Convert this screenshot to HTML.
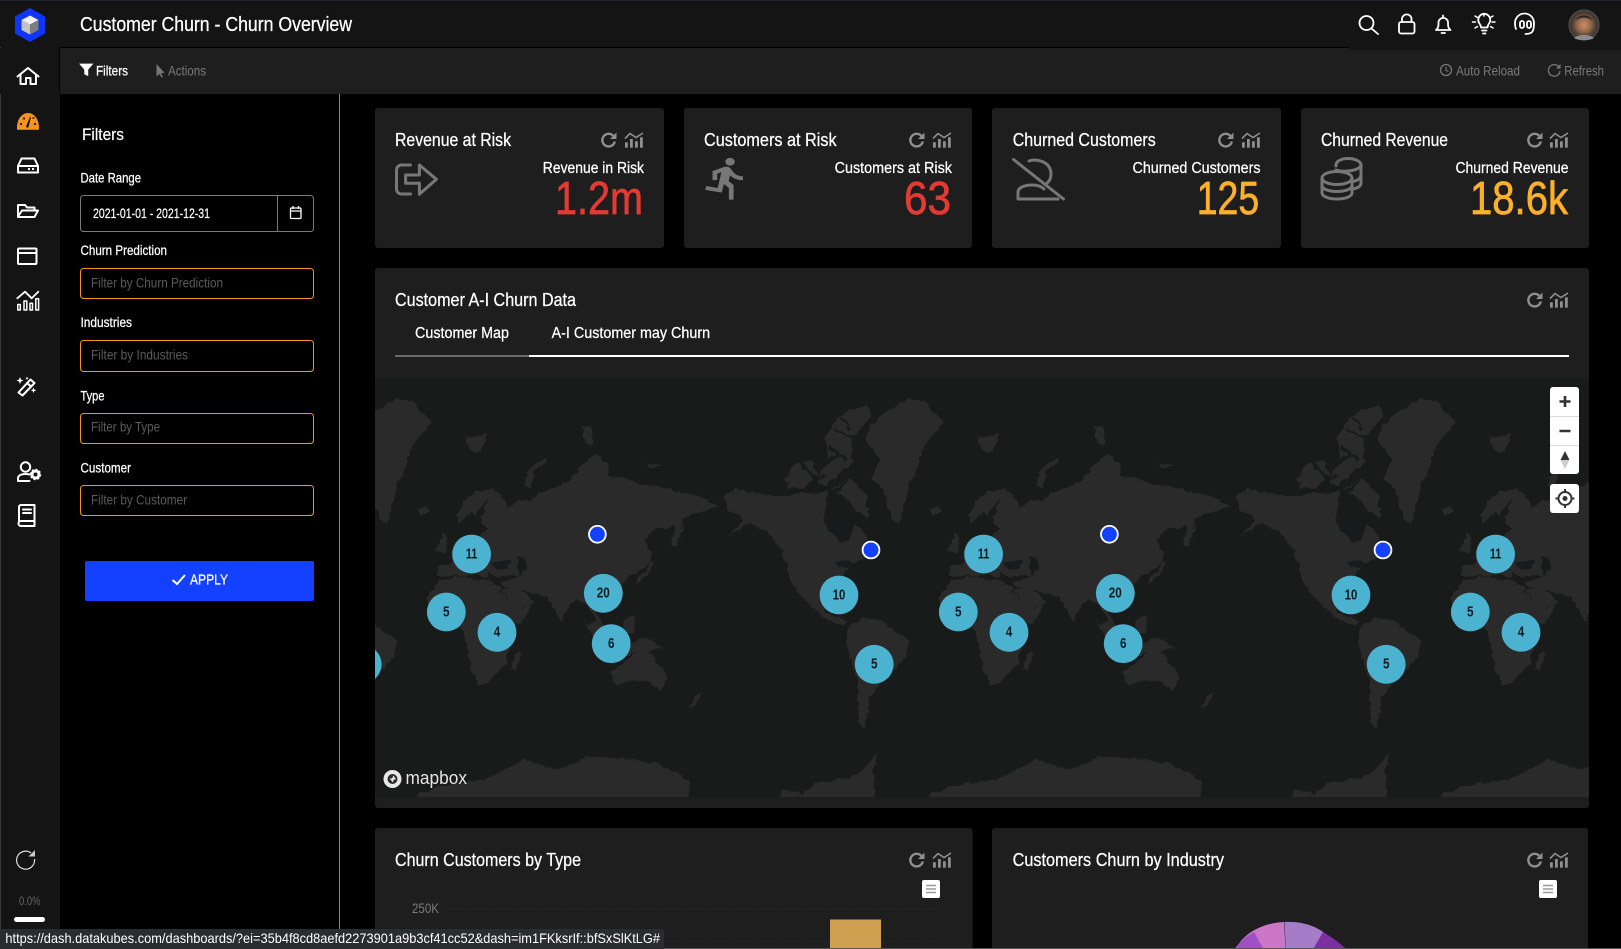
<!DOCTYPE html>
<html><head><meta charset="utf-8"><title>Customer Churn - Churn Overview</title>
<style>
html,body{margin:0;padding:0;background:#000;width:1621px;height:949px;overflow:hidden}
svg{display:block;position:absolute;left:0;top:0}
text{font-family:"Liberation Sans Narrow","Liberation Sans",sans-serif;fill:#fff}
.l,.ct,.sl{stroke:#fff;stroke-width:.25}
.g{fill:#7a7a7a;stroke:none}.p{fill:#5a5a5a;font-size:14px}.l{font-size:14px}
.ct{font-size:18px}.sl{font-size:15.5px}.v{font-size:46px;stroke-width:.7}
.c{font-size:15px;font-weight:bold;fill:#0c1a20;text-anchor:middle}
.ic{fill:none;stroke:#fff;stroke-width:2;stroke-linejoin:round;stroke-linecap:round}
.li{fill:none;stroke:#777;stroke-width:3;stroke-linejoin:round;stroke-linecap:round}
</style></head><body>
<svg width="1621" height="949" viewBox="0 0 1621 949" xmlns="http://www.w3.org/2000/svg">
<defs>
<clipPath id="mc"><rect x="375" y="378" width="1214" height="419"/></clipPath>
<filter id="rough"><feTurbulence type="fractalNoise" baseFrequency=".05" numOctaves="3" seed="4"/><feDisplacementMap in="SourceGraphic" scale="16" xChannelSelector="R" yChannelSelector="G"/></filter>
<g id="rf"><path d="M13.300 4.900A6.300 6.300 0 1 0 14.800 10.500" fill="none" stroke="#8f8f8f" stroke-width="2.400"/><path d="M16.500 1.500V8H10z" fill="#8f8f8f"/></g>
<g id="ch" fill="#8f8f8f"><path d="M0 6.500L5 1.500 11 5.500 18 1" fill="none" stroke="#8f8f8f" stroke-width="1.600"/><rect x="0" y="10.300" width="2.800" height="5.400"/><rect x="5" y="7" width="2.800" height="8.700"/><rect x="10" y="9.300" width="2.800" height="6.400"/><rect x="15" y="5.300" width="2.800" height="10.400"/></g>
<g id="world" transform="translate(370,380) scale(.3954,.3333)"><g fill="#2b2a29" filter="url(#rough)">
<!-- Africa --><path d="M145 665L155 630 178 600 230 590 262 600 300 600 328 622 345 660 362 695 410 668 395 705 370 735 352 800 345 850 322 880 298 912 270 912 258 880 247 820 238 755 205 738 175 735 150 705Z"/>
<path d="M358 868L365 830 378 812 382 825 372 868Z"/>
<!-- Arabia --><path d="M335 628L375 625 402 645 415 668 385 680 362 700 348 665Z"/>
<!-- Eurasia --><path d="M170 590L172 555 205 552 212 528 232 505 222 480 238 470 258 478 280 462 300 445 270 420 258 395 225 430 218 405 240 360 275 330 315 328 345 368 345 385 375 360 400 362 430 340 470 322 510 300 530 262 570 220 605 258 600 290 640 290 680 312 720 318 760 328 795 340 830 345 880 380 850 392 815 402 790 415 775 500 762 500 770 440 745 445 715 450 692 478 715 520 700 560 670 580 650 592 636 620 642 640 610 670 590 682 575 690 570 702 585 725 595 745 572 720 548 675 525 655 508 670 482 722 468 690 445 650 415 640 375 628 345 622 330 610 375 590 350 585 318 588 300 575 290 595 268 585 240 590 200 588Z"/>
<!-- Japan / Sakhalin --><path d="M672 610L700 590 712 570 718 545 708 545 700 575 675 595Z"/><path d="M765 500L795 420 785 470Z"/>
<!-- seas --><path fill="#191a1a" d="M375 530L392 535 398 570 380 590 370 560Z"/><path fill="#191a1a" d="M310 548L355 540 350 565 318 570Z"/><path fill="#191a1a" d="M272 395L300 355 285 400 280 430 262 432Z"/>
<!-- Britain --><path d="M168 512L185 450 195 490 192 520Z"/><path d="M120 388L145 378 150 395 130 405Z"/>
<!-- islands --><path d="M240 175L295 160 280 215 262 220Z"/><path d="M535 140L555 135 570 195 545 190Z"/><path d="M695 250L740 255 710 265Z"/><path d="M393 315L400 270 445 232 450 240 412 275 405 325Z"/>
<!-- SE Asia --><path d="M548 735L578 720 600 755 590 790 560 760Z"/><path d="M640 720L670 705 665 760 640 760Z"/><path d="M610 820L650 800 690 770 740 800 700 815 640 825Z"/>
<!-- Australia --><path d="M610 875L640 850 678 812 715 820 722 840 750 880 745 915 735 936 705 905 665 900 622 916 615 900Z"/>
<path d="M805 982L825 950 840 938 838 950 815 985Z"/>
<!-- N America --><path d="M895 350L925 325 960 335 1000 345 1050 350 1090 338 1130 340 1160 330 1155 365 1145 420 1160 445 1190 490 1215 475 1225 430 1250 460 1275 510 1250 535 1215 555 1200 580 1190 622 1205 640 1170 630 1145 655 1150 695 1180 710 1210 725 1195 740 1150 715 1115 680 1085 640 1060 590 1050 540 1030 490 1000 450 960 430 930 450 905 470 945 420 905 385Z"/>
<path fill="#191a1a" d="M1155 420L1200 410 1215 470 1185 478 1160 455Z"/>
<path fill="#191a1a" d="M1175 545L1210 540 1225 560 1185 562Z"/>
<!-- Arctic archipelago --><path d="M1050 300L1075 255 1115 240 1130 285 1100 325 1060 325Z"/><path d="M1150 170L1185 110 1220 85 1260 80 1272 98 1240 150 1215 185 1222 245 1190 280 1150 320 1125 300 1160 245Z"/><path d="M1170 330L1210 290 1255 345 1262 415 1232 392 1200 352Z"/>
<g fill="none" stroke="#191a1a" stroke-width="7"><path d="M1090 250L1130 300M1160 200L1205 240M1175 150L1225 175M1130 260L1185 225M1190 110L1215 150M1215 290L1175 335M1105 330L1150 280"/></g>
<!-- Greenland --><path d="M1252 180L1265 140 1300 100 1360 55 1400 65 1425 95 1450 125 1420 170 1395 215 1385 265 1365 310 1340 432 1320 420 1300 335 1270 290 1290 240Z"/>
<path d="M1415 390L1440 380 1445 395 1425 405Z"/>
<!-- S America --><path d="M1205 775L1215 735 1250 712 1290 720 1320 750 1368 785 1345 850 1310 880 1290 910 1262 960 1255 1042 1238 1030 1232 960 1235 905 1208 810Z"/>
<!-- Antarctica --><path d="M110 1290L120 1245 180 1218 300 1195 390 1138 470 1170 550 1132 640 1135 720 1150 790 1185 812 1215 795 1290Z"/>
<path d="M1010 1290L1045 1232 1095 1240 1130 1210 1220 1190 1255 1160 1285 1115 1272 1170 1278 1290Z"/>
</g></g>
</defs>

<!-- backgrounds -->
<rect width="1621" height="949" fill="#000"/>
<rect x="0" y="0" width="60" height="949" fill="#141414"/>
<rect x="0" y="0" width="1" height="949" fill="#3a3a3a"/>
<rect x="0" y="48" width="1621" height="46" fill="#1e1e1e"/>
<rect x="0" y="48" width="60" height="46" fill="#141414"/>
<rect x="0" y="0" width="1621" height="47" fill="#141414"/>
<rect x="1349" y="47" width="272" height="3" fill="#141414"/>
<rect x="0" y="0" width="1621" height="1" fill="#1d2030"/>
<rect x="59" y="48" width="1" height="46" fill="#000"/>
<rect x="60" y="47" width="1289" height="1" fill="#000"/>
<rect x="339" y="94" width="1" height="840" fill="#8a8a8a"/>

<!-- logo -->
<path d="M30 8L45 16.500V33.500L30 42 15 33.500V16.500Z" fill="#1034f8"/>
<path d="M30 15.500L38.500 20 30 24.500 21.500 20Z" fill="#f2f2f2"/><path d="M21.500 20L30 24.500V34.500L21.500 30Z" fill="#c4c4c4"/><path d="M38.500 20L30 24.500V34.500L38.500 30Z" fill="#7d7d7d"/>
<text x="80" y="31" font-size="20" stroke="#fff" stroke-width=".25" textLength="272" lengthAdjust="spacingAndGlyphs">Customer Churn - Churn Overview</text>

<!-- top icons -->
<g class="ic" stroke-width="1.800" style="stroke-width:1.800"><circle cx="1366.500" cy="23" r="7"/><path d="M1371.500 28.500L1378 34"/>
<rect x="1399" y="22" width="15.500" height="11.500" rx="2"/><path d="M1402 22v-3.500a4.800 4.800 0 0 1 9.500 0V22"/>
<path d="M1436 30c2.500-2 2.500-4 2.500-8a4.800 4.800 0 0 1 9.500 0c0 4 0 6 2.500 8zM1441.500 33h3.500"/><path d="M1443 15.500v1.500"/>
<path d="M1479.500 23.500a6 6 0 1 1 9.500 0c-1.200 1.600-1.500 3-1.500 4h-6.500c0-1-.3-2.400-1.500-4zM1482 30.500h4.500M1483 33.500h2.500"/><path style="stroke-width:1.500" d="M1472.500 22h3M1492 22h3M1475 16l2.500 1.500M1493 16l-2.500 1.500M1475 28l2.500-1.500M1493 28l-2.500-1.500M1484 14v2"/>
<path d="M1516 29c-1-2-1-4-1-6a9.500 9.500 0 0 1 19 0c0 5-.5 7-1.500 8.500-1.500 2-4 2.500-7 2.500"/><rect x="1520" y="21" width="4" height="7" rx="2"/><rect x="1527" y="21" width="4" height="7" rx="2"/></g>
<defs><radialGradient id="av" cx=".5" cy=".5" r=".55"><stop offset="0" stop-color="#c88f6a"/><stop offset=".4" stop-color="#9a6a4a"/><stop offset=".7" stop-color="#4d4236"/><stop offset="1" stop-color="#2e2a24"/></radialGradient></defs>
<circle cx="1584" cy="25" r="15" fill="url(#av)" stroke="#555" stroke-width="1"/>
<path d="M1576 20c3-6 13-6 16 0l-2-1c-4-2-9-2-12 0z" fill="#2a2320"/><path d="M1574 38c4-4 16-4 20 0-5 3-15 3-20 0z" fill="#8c8c90"/>

<!-- subbar -->
<path d="M80 64h12.500l-4.700 5.500v6l-3.100-1.500v-4.500z" fill="#fff" stroke="#fff" stroke-width=".8"/>
<text x="96" y="75.500" class="l" textLength="32" lengthAdjust="spacingAndGlyphs">Filters</text>
<path d="M156.500 64v12.500l3-2.500 2 3.500 1.500-.8-2-3.500 3.500-.3z" fill="#777"/>
<text x="168" y="75.500" class="l g" textLength="38" lengthAdjust="spacingAndGlyphs">Actions</text>
<circle cx="1446" cy="70" r="5.500" fill="none" stroke="#777" stroke-width="1.300"/><path d="M1446 67v3.500l2.500 1" fill="none" stroke="#777" stroke-width="1.200"/>
<text x="1456" y="75.500" class="l g" textLength="64" lengthAdjust="spacingAndGlyphs">Auto Reload</text>
<path d="M1558.500 66.500A5.800 5.800 0 1 0 1560 71" fill="none" stroke="#777" stroke-width="1.300"/><path d="M1560.500 64v4.500H1556z" fill="#777"/>
<text x="1564.300" y="75.500" class="l g" textLength="39.700" lengthAdjust="spacingAndGlyphs">Refresh</text>

<!-- side icons -->
<g class="ic">
<path d="M17.500 76.500L28 68l10.500 8.500M20.500 74.500V84h5.500v-6h4.500v6H36v-9.500"/>
<path d="M18 166l3.500-7.500h13L38 166v6.500H18zM18 166h20"/>
<path d="M18 216.500V205h7l2 2.500h7.500v3M18 216.500l4-6h16l-3.500 6.500H18z"/>
<rect x="18" y="248.500" width="18.500" height="15.500" rx="1"/><path d="M18 253h18.500"/>
<path d="M17.300 298.300L25 291.700 31.700 298.300 38.300 291.700" stroke-width="1.800" style="stroke-width:1.800"/>
<path style="stroke-width:1.500" d="M17.800 304.500h2.500v5.500h-2.500zM24 301h2.800v9H24zM30 303.200h2.500V310H30zM35.800 298.800h2.800V310h-2.800z"/>
<path d="M18.500 392.500l12-13 4 3.500-12 12.500zM27 383l4 3.500" />
<circle cx="25.500" cy="467" r="4.700"/><path d="M18 481v-2.500c0-3.500 4-4.500 7.500-4.500 1.500 0 3 .2 4 .5M18 481h11.500"/>
<path d="M19 521V507a2 2 0 0 1 2-2h13.500v16H21a2.500 2.500 0 0 0 0 5h13.500v-5M23 509.500h8M23 513h8"/>
</g>
<path d="M20 377l1 2.500 2.500 1-2.500 1-1 2.500-1-2.500-2.500-1 2.500-1zM33.500 387.500l.8 2 2 .8-2 .8-.8 2-.8-2-2-.8 2-.8zM27 376.500l.5 1.300 1.300.5-1.300.5-.5 1.300-.5-1.300-1.300-.5 1.300-.5z" fill="#fff"/>
<circle cx="35.500" cy="474.500" r="3.500" fill="none" stroke="#fff" stroke-width="3"/><circle cx="35.500" cy="474.500" r="5" fill="none" stroke="#fff" stroke-width="1.500" stroke-dasharray="2 1.900"/>
<path d="M17 129c-.5-9 4.500-16 11-16s11.500 7 11 16c0 .5-.5.8-1 .8H18c-.5 0-1-.3-1-.8z" fill="#f7941e"/>
<path d="M30.500 117l-2.500 10-1.500-.3z" fill="#141414" stroke="#141414"/><g fill="#141414"><circle cx="21" cy="124" r="1.100"/><circle cx="24" cy="118.500" r="1.100"/><circle cx="35" cy="124" r="1.100"/><circle cx="33.500" cy="118" r="1"/></g>
<rect x="28" y="168" width="2" height="2" fill="#fff"/><rect x="32" y="168" width="2" height="2" fill="#fff"/>
<path d="M31 853a9 9 0 1 0 3.500 6" fill="none" stroke="#ddd" stroke-width="1.200"/><path d="M35 850v6.500h-6.500z" fill="#ddd" opacity=".9"/>
<text x="19" y="905" font-size="11.500" style="fill:#666" textLength="21.500" lengthAdjust="spacingAndGlyphs">0.0%</text>
<rect x="14" y="917" width="31" height="5" rx="2.500" fill="#fff"/>

<!-- filter panel -->
<text x="82" y="140" font-size="17" stroke="#fff" stroke-width=".2" textLength="42" lengthAdjust="spacingAndGlyphs">Filters</text>
<text x="80.500" y="182.500" class="l" textLength="60.500" lengthAdjust="spacingAndGlyphs">Date Range</text>
<rect x="80.500" y="195.500" width="233" height="36" rx="3" fill="#000" stroke="#7a7a7a"/><rect x="277" y="196" width="1" height="35" fill="#7a7a7a"/>
<text x="93" y="218" font-size="13.500" stroke="#fff" stroke-width=".2" textLength="117" lengthAdjust="spacingAndGlyphs">2021-01-01 - 2021-12-31</text>
<rect x="290.500" y="208" width="10.500" height="10.500" rx="1" fill="none" stroke="#fff" stroke-width="1.300"/><path d="M290.500 211h10.500M293 206v3M298.500 206v3" stroke="#fff" stroke-width="1.300"/>
<text x="80.500" y="255" class="l" textLength="86.500" lengthAdjust="spacingAndGlyphs">Churn Prediction</text>
<rect x="80.500" y="268.500" width="233" height="30" rx="3" fill="#000" stroke="#f7941e"/>
<text x="91" y="287.500" class="p" textLength="132" lengthAdjust="spacingAndGlyphs">Filter by Churn Prediction</text>
<text x="80.500" y="327" class="l" textLength="51.500" lengthAdjust="spacingAndGlyphs">Industries</text>
<rect x="80.500" y="340.500" width="233" height="31" rx="3" fill="#000" stroke="#f7941e"/>
<text x="91" y="359.500" class="p" textLength="97" lengthAdjust="spacingAndGlyphs">Filter by Industries</text>
<text x="80.500" y="400.500" class="l" textLength="24" lengthAdjust="spacingAndGlyphs">Type</text>
<rect x="80.500" y="413.500" width="233" height="30" rx="3" fill="#000" stroke="#f7941e"/>
<text x="91" y="431.500" class="p" textLength="69" lengthAdjust="spacingAndGlyphs">Filter by Type</text>
<text x="80.500" y="472.500" class="l" textLength="50.500" lengthAdjust="spacingAndGlyphs">Customer</text>
<rect x="80.500" y="485.500" width="233" height="30" rx="3" fill="#000" stroke="#f7941e"/>
<text x="91" y="504.500" class="p" textLength="96" lengthAdjust="spacingAndGlyphs">Filter by Customer</text>
<rect x="85" y="561" width="229" height="40" rx="2" fill="#1440ff"/>
<path d="M172.500 580l4.500 4 8-9" fill="none" stroke="#fff" stroke-width="2"/>
<text x="190" y="584.500" font-size="15" stroke="#fff" stroke-width=".25" textLength="38" lengthAdjust="spacingAndGlyphs">APPLY</text>

<!-- KPI cards -->
<g fill="#1e1e1e"><rect x="375" y="108" width="289" height="140" rx="3"/><rect x="684" y="108" width="288" height="140" rx="3"/><rect x="992" y="108" width="289" height="140" rx="3"/><rect x="1301" y="108" width="288" height="140" rx="3"/><rect x="375" y="268" width="1214" height="540" rx="3"/><rect x="375" y="828" width="597.500" height="130" rx="3"/><rect x="992" y="828" width="596" height="130" rx="3"/></g>

<text x="395" y="146.200" class="ct" textLength="116" lengthAdjust="spacingAndGlyphs">Revenue at Risk</text>
<text x="704" y="146.200" class="ct" textLength="132.600" lengthAdjust="spacingAndGlyphs">Customers at Risk</text>
<text x="1012.700" y="146.200" class="ct" textLength="143" lengthAdjust="spacingAndGlyphs">Churned Customers</text>
<text x="1321" y="146.200" class="ct" textLength="127" lengthAdjust="spacingAndGlyphs">Churned Revenue</text>

<text x="542.800" y="173" class="sl" textLength="101.200" lengthAdjust="spacingAndGlyphs">Revenue in Risk</text>
<text x="834.600" y="173" class="sl" textLength="117.400" lengthAdjust="spacingAndGlyphs">Customers at Risk</text>
<text x="1132.500" y="173" class="sl" textLength="128" lengthAdjust="spacingAndGlyphs">Churned Customers</text>
<text x="1455.500" y="173" class="sl" textLength="113" lengthAdjust="spacingAndGlyphs">Churned Revenue</text>

<text x="555" y="214" class="v" style="fill:#e53a33;stroke:#e53a33" textLength="88" lengthAdjust="spacingAndGlyphs">1.2m</text>
<text x="904" y="214" class="v" style="fill:#e53a33;stroke:#e53a33" textLength="47" lengthAdjust="spacingAndGlyphs">63</text>
<text x="1196.700" y="214" class="v" style="fill:#fbb02a;stroke:#fbb02a" textLength="62.500" lengthAdjust="spacingAndGlyphs">125</text>
<text x="1470" y="214" class="v" style="fill:#fbb02a;stroke:#fbb02a" textLength="98" lengthAdjust="spacingAndGlyphs">18.6k</text>

<use href="#rf" x="600" y="131"/><use href="#ch" x="625" y="132"/>
<use href="#rf" x="908" y="131"/><use href="#ch" x="933" y="132"/>
<use href="#rf" x="1217" y="131"/><use href="#ch" x="1242" y="132"/>
<use href="#rf" x="1526" y="131"/><use href="#ch" x="1550" y="132"/>
<use href="#rf" x="1526" y="291"/><use href="#ch" x="1550" y="292"/>
<use href="#rf" x="908" y="851"/><use href="#ch" x="933" y="852"/>
<use href="#rf" x="1526" y="851"/><use href="#ch" x="1550" y="852"/>

<!-- card icons -->
<path class="li" d="M410.500 165h-9a5 5 0 0 0-5 5v19a5 5 0 0 0 5 5h9"/>
<path class="li" d="M405.600 175h13.800v-10l17 14.300-17 15v-11h-13.800z"/>
<path fill="#777" transform="translate(698.500,155) scale(2.340,1.940)" d="M13.490 5.480c1.100 0 2-.9 2-2s-.9-2-2-2-2 .9-2 2 .9 2 2 2zm-3.600 13.900l1-4.400 2.100 2v6h2v-7.500l-2.100-2 .6-3c1.300 1.500 3.300 2.500 5.500 2.500v-2c-1.900 0-3.500-1-4.300-2.400l-1-1.600c-.4-.6-1-1-1.700-1-.3 0-.5.100-.8.100l-5.200 2.200v4.700h2v-3.400l1.800-.7-1.600 8.100-4.900-1-.4 2 7 1.400z"/>
<path class="li" d="M1013.500 159.500L1063.500 199M1029 161c8-3 22 1 22 13 0 5-2 8-5 10M1018 199v-7c0-4 6-7 14-7 5 0 9 1 12 4M1018 199h40"/>
<g class="li"><path d="M1336 166v-1c0-3.500 5-6.500 12-6.500s13 3 13 6.500v18c0 3-3 5-8 6"/><path d="M1336 170c3 1 7 1.500 12 1 7-.5 13-3 13-6.500M1361 175c0 3-3 5.500-8 6.500"/>
<ellipse cx="1337" cy="178" rx="15" ry="6.500"/><path d="M1322 178v15c0 3.500 7 6 15 6s15-2.500 15-6v-15M1322 185.500c0 3.500 7 6 15 6s15-2.500 15-6"/></g>

<!-- big card -->
<text x="395" y="306" class="ct" textLength="181" lengthAdjust="spacingAndGlyphs">Customer A-I Churn Data</text>
<text x="415" y="338" font-size="15.500" stroke="#fff" stroke-width=".25" textLength="94" lengthAdjust="spacingAndGlyphs">Customer Map</text>
<text x="551.600" y="338" font-size="15.500" stroke="#fff" stroke-width=".25" textLength="158.500" lengthAdjust="spacingAndGlyphs">A-I Customer may Churn</text>
<rect x="395" y="355" width="134" height="2" fill="#6a6a6a"/><rect x="529" y="355" width="1040" height="2" fill="#fff"/>

<!-- map -->
<rect x="375" y="378" width="1214" height="419" fill="#191a1a"/>
<g clip-path="url(#mc)">
<use href="#world" x="-512"/><use href="#world" x="0"/><use href="#world" x="512"/><use href="#world" x="1024"/>
<g fill="#4bb3d0">
<circle cx="362.200" cy="664.300" r="19.400"/>
<circle cx="471.600" cy="554" r="19.400"/><circle cx="446.300" cy="612" r="19.400"/><circle cx="497" cy="632.300" r="19.400"/><circle cx="603.300" cy="593.300" r="19.400"/><circle cx="611.200" cy="643.700" r="19.400"/><circle cx="839" cy="595" r="19.400"/><circle cx="874.200" cy="664.300" r="19.400"/>
<circle cx="983.600" cy="554" r="19.400"/><circle cx="958.300" cy="612" r="19.400"/><circle cx="1009" cy="632.300" r="19.400"/><circle cx="1115.300" cy="593.300" r="19.400"/><circle cx="1123.200" cy="643.700" r="19.400"/><circle cx="1351" cy="595" r="19.400"/><circle cx="1386.200" cy="664.300" r="19.400"/>
<circle cx="1495.600" cy="554" r="19.400"/><circle cx="1470.300" cy="612" r="19.400"/><circle cx="1521" cy="632.300" r="19.400"/>
</g>
<g fill="#1440ff" stroke="#fff" stroke-width="1.800"><circle cx="597.400" cy="534.300" r="8.400"/><circle cx="871" cy="550" r="8.400"/><circle cx="1109.400" cy="534.300" r="8.400"/><circle cx="1383" cy="550" r="8.400"/></g>
<g>
<text class="c" x="471.600" y="558.500" textLength="11.500" lengthAdjust="spacingAndGlyphs">11</text><text class="c" x="446.300" y="616.500" textLength="6.500" lengthAdjust="spacingAndGlyphs">5</text><text class="c" x="497" y="636.500" textLength="6.500" lengthAdjust="spacingAndGlyphs">4</text><text class="c" x="603.300" y="597.500" textLength="13" lengthAdjust="spacingAndGlyphs">20</text><text class="c" x="611.200" y="648" textLength="6.500" lengthAdjust="spacingAndGlyphs">6</text><text class="c" x="839" y="599.500" textLength="12.500" lengthAdjust="spacingAndGlyphs">10</text><text class="c" x="874.200" y="668.500" textLength="6.500" lengthAdjust="spacingAndGlyphs">5</text>
<text class="c" x="983.600" y="558.500" textLength="11.500" lengthAdjust="spacingAndGlyphs">11</text><text class="c" x="958.300" y="616.500" textLength="6.500" lengthAdjust="spacingAndGlyphs">5</text><text class="c" x="1009" y="636.500" textLength="6.500" lengthAdjust="spacingAndGlyphs">4</text><text class="c" x="1115.300" y="597.500" textLength="13" lengthAdjust="spacingAndGlyphs">20</text><text class="c" x="1123.200" y="648" textLength="6.500" lengthAdjust="spacingAndGlyphs">6</text><text class="c" x="1351" y="599.500" textLength="12.500" lengthAdjust="spacingAndGlyphs">10</text><text class="c" x="1386.200" y="668.500" textLength="6.500" lengthAdjust="spacingAndGlyphs">5</text>
<text class="c" x="1495.600" y="558.500" textLength="11.500" lengthAdjust="spacingAndGlyphs">11</text><text class="c" x="1470.300" y="616.500" textLength="6.500" lengthAdjust="spacingAndGlyphs">5</text><text class="c" x="1521" y="636.500" textLength="6.500" lengthAdjust="spacingAndGlyphs">4</text>
</g>
</g>
<!-- mapbox -->
<circle cx="392.500" cy="779" r="9" fill="#e8e8e8"/><circle cx="392.500" cy="779" r="5" fill="#2b2a29"/><path d="M393.500 775.500l-1.500 3h-2.500l3.500 4 .8-3h2.200z" fill="#e8e8e8"/>
<text x="405.500" y="784" font-size="18" style="fill:#e4e4e4" textLength="61.500" lengthAdjust="spacingAndGlyphs">mapbox</text>
<!-- nav control -->
<rect x="1550" y="387" width="29" height="87" rx="3" fill="#fff"/><path d="M1550 416.500h29M1550 445.500h29" stroke="#ddd"/>
<path d="M1565 396v11M1559.500 401.500h11M1559.500 431h11" stroke="#333" stroke-width="2.600"/>
<path d="M1565 451l4.500 9h-9z" fill="#333"/><path d="M1565 469l4.500-9h-9z" fill="#ccc"/>
<rect x="1550" y="484" width="29" height="29" rx="3" fill="#fff"/>
<circle cx="1565" cy="498.500" r="6.500" fill="none" stroke="#333" stroke-width="2"/><circle cx="1565" cy="498.500" r="2.500" fill="#333"/><path d="M1565 489v3M1565 505v3M1555.500 498.500h3M1571.500 498.500h3" stroke="#333" stroke-width="2"/>

<!-- bottom -->
<text x="395" y="866" class="ct" textLength="186" lengthAdjust="spacingAndGlyphs">Churn Customers by Type</text>
<text x="1012.600" y="866" class="ct" textLength="211.400" lengthAdjust="spacingAndGlyphs">Customers Churn by Industry</text>
<g fill="#fff"><rect x="922" y="880" width="18" height="18" rx="2"/><rect x="1539" y="880" width="18" height="18" rx="2"/></g>
<path d="M926 885.500h10M926 889h10M926 892.500h10M1543 885.500h10M1543 889h10M1543 892.500h10" stroke="#9a9a9a" stroke-width="1.500"/>
<text x="412" y="913" class="l g" textLength="27" lengthAdjust="spacingAndGlyphs">250K</text>
<path d="M445 909H935M445 942H935" stroke="#333" stroke-dasharray="1 2"/>
<rect x="830" y="919.500" width="51" height="32" fill="#cfa050"/>
<g>
<path d="M1288 993L1284 922C1263 923 1248 932 1240 942Z" fill="#cb76c7"/>
<path d="M1288 993L1284.500 922C1310 921 1323 931 1332 939Z" fill="#a57cc8"/>
<path d="M1288 993L1254 932C1245 937 1238 943 1234 950Z" fill="#a04fc4"/>
<path d="M1288 993L1323 932C1333 938 1340 943 1347 950Z" fill="#7b2fa0"/>
</g>
<!-- status bar -->
<rect x="0" y="948" width="1621" height="1" fill="#555"/>
<path d="M0 929H661a3 3 0 0 1 3 3V949H0Z" fill="#2a2c30"/>
<text x="5.400" y="943" font-size="14" style="font-family:'Liberation Sans',sans-serif" textLength="654.600" lengthAdjust="spacingAndGlyphs">https://dash.datakubes.com/dashboards/?ei=35b4f8cd8aefd2273901a9b3cf41cc52&amp;dash=im1FKksrIf::bfSxSlKtLG#</text>
</svg>
</body></html>
